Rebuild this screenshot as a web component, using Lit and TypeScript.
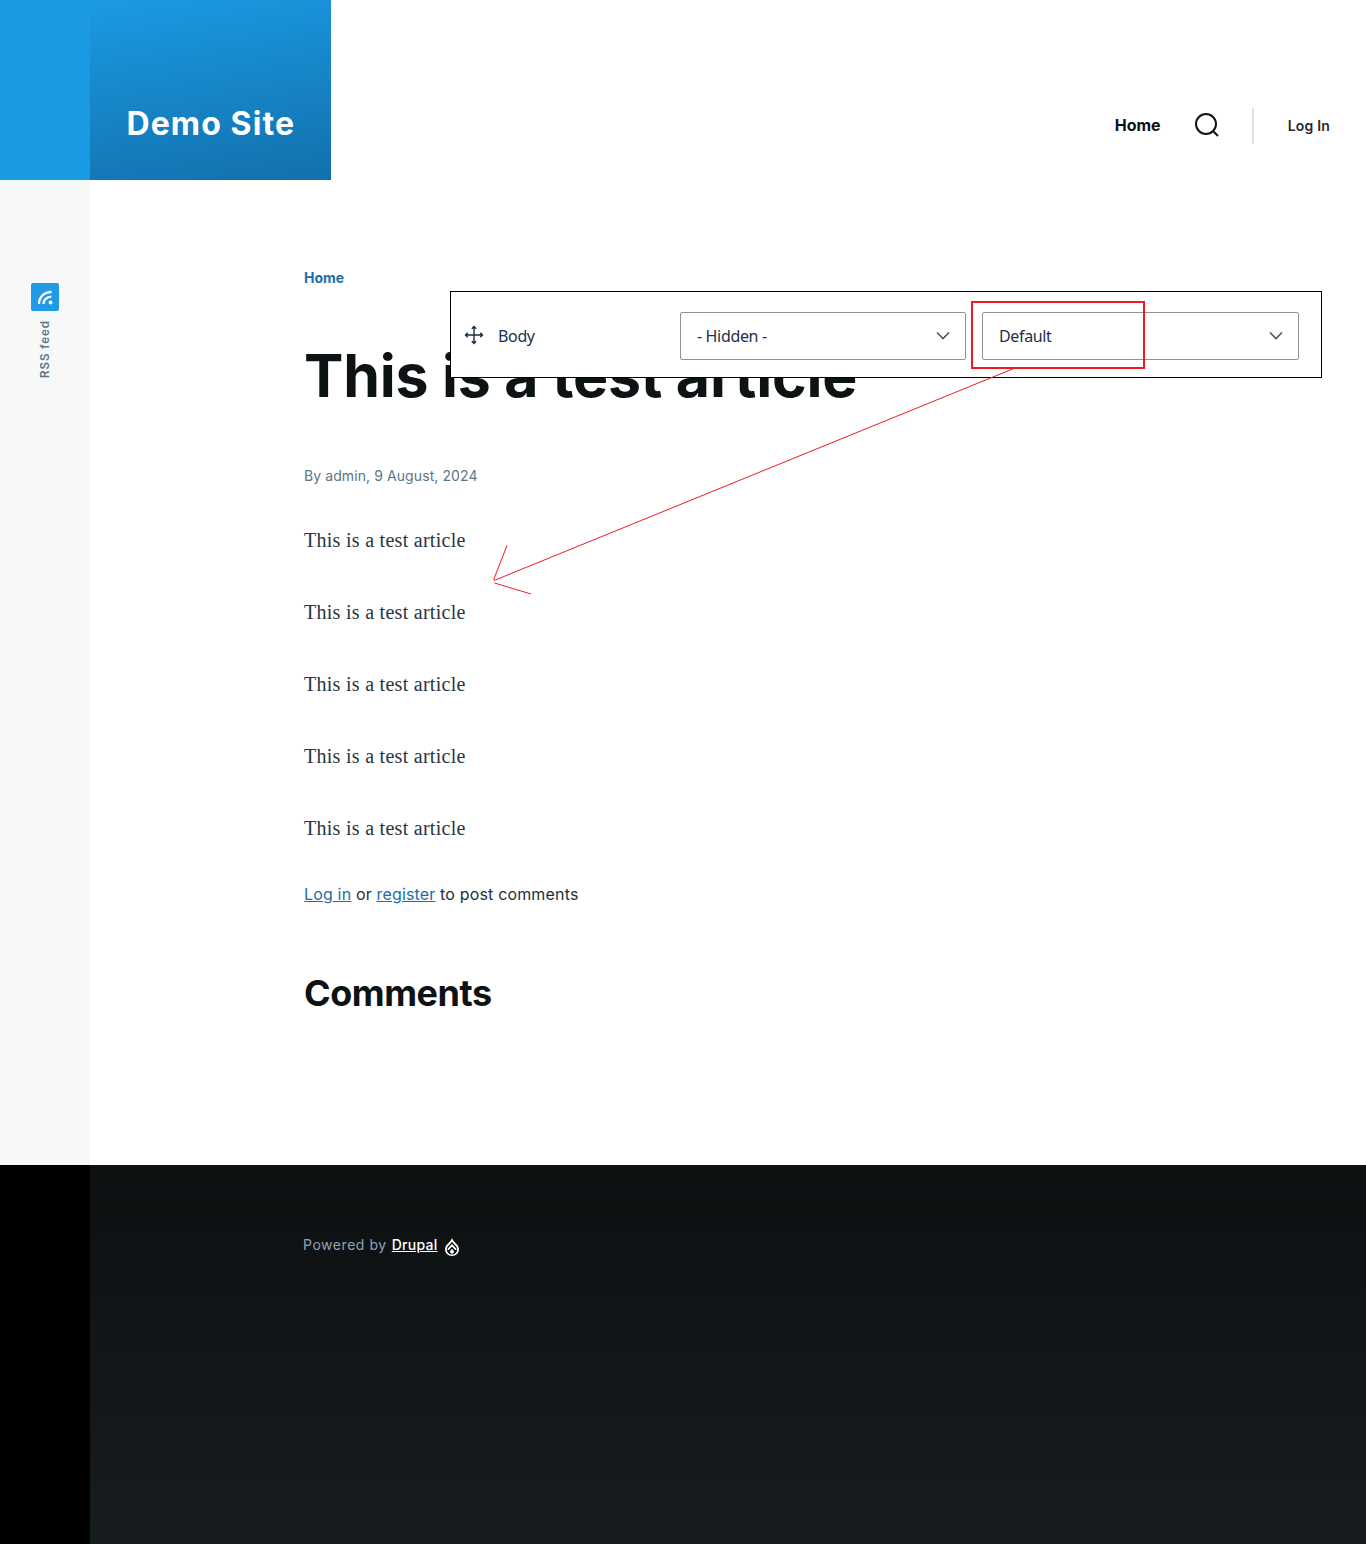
import { LitElement, html, css, svg } from "lit";
import { customElement } from "lit/decorators.js";

@customElement("app-root")
export class AppRoot extends LitElement {
  static styles = css`
    :host { display: block; position: relative; width: 1366px; height: 1544px; overflow: hidden; background: #fff; font-family: Inter, "Liberation Sans", sans-serif; }
    .header { display: flex; height: 180px; align-items: stretch; }
    .brand-left { width: 90px; background: #1b9ae4; }
    .brand { width: 241px; background: linear-gradient(170deg, #1b9ae4 0%, #1270ab 100%); display: flex; padding: 102px 0 0 36.5px; box-sizing: border-box; }
    .brand span { color: #fff; font-size: 32px; line-height: 44px; font-weight: 700; letter-spacing: 1.1px; white-space: nowrap; }
    .nav { flex: 1; display: flex; align-items: center; justify-content: flex-end; padding: 70px 36px 0 0; box-sizing: border-box; height: 180px; }
    .nav-home { font-size: 16px; font-weight: 700; color: #0d1214; margin-right: 33px; }
    .nav-search { display: block; margin-right: 32px; }
    .nav-sep { width: 2px; height: 36px; background: #dbe0e5; margin: 2px 34px 0 0; }
    .nav-login { font-size: 14px; font-weight: 600; color: #1f2a33; letter-spacing: 0.2px; }
    .middle { display: flex; height: 985px; }
    .side { width: 90px; background: #f7f9f9; display: flex; flex-direction: column; align-items: center; padding-top: 103px; box-sizing: border-box; }
    .rss-box { width: 28px; height: 28px; border-radius: 2px; background: #1f9be6; display: block; }
    .rss-text { writing-mode: vertical-rl; transform: rotate(180deg); font-size: 11.5px; line-height: 14px; font-weight: 600; color: #5d7585; margin-top: 9px; letter-spacing: 0.95px; }
    .content { flex: 1; padding: 89px 0 0 214px; box-sizing: border-box; }
    .crumb { font-size: 14px; line-height: 18px; font-weight: 700; color: #1b6ea8; }
    h1 { margin: 53px 0 0; font-size: 59px; line-height: 72px; font-weight: 700; color: #0d1214; letter-spacing: -0.22px; white-space: nowrap; }
    .meta { margin-top: 55px; font-size: 14px; line-height: 18px; color: #5d7585; letter-spacing: 0.09px; }
    .body { margin-top: 42px; display: flex; flex-direction: column; gap: 45px; }
    .body p { margin: 0; font-family: "Liberation Serif", serif; font-size: 20px; line-height: 27px; color: #2a3540; letter-spacing: 0.28px; }
    .login { margin-top: 39px; font-size: 16px; line-height: 27px; color: #232f38; letter-spacing: 0.16px; }
    .login a { color: #1b6ea8; text-decoration: underline; }
    h2 { margin: 63px 0 0; font-size: 36px; line-height: 45px; font-weight: 700; color: #0d1214; letter-spacing: -0.45px; }
    .footer { display: flex; height: 379px; }
    .foot-left { width: 90px; background: #000; }
    .foot { flex: 1; background: linear-gradient(180deg, #0d1011 0%, #171c1f 100%); padding: 71px 0 0 213px; box-sizing: border-box; }
    .foot-line { display: flex; align-items: flex-start; font-size: 14px; line-height: 18px; color: #8fa3b0; letter-spacing: 0.55px; }
    .foot-line a { color: #fff; text-decoration: underline; margin-left: 5px; font-weight: 500; letter-spacing: 0.25px; }
    .foot-line svg { margin: 2px 0 0 7px; display: block; }
    .panel { position: absolute; left: 450px; top: 291px; width: 872px; height: 87px; box-sizing: border-box; border: 1px solid #000; background: #fff; display: flex; align-items: center; padding: 3px 22px 0 13px; font-family: "Noto Sans", sans-serif; font-size: 16px; letter-spacing: -0.35px; line-height: 22px; color: #232f4b; }
    .panel-move { display: block; margin-top: -3px; }
    .panel-label { margin-left: 14px; width: 182px; }
    .select { box-sizing: border-box; height: 48px; border: 1px solid #8e929c; border-radius: 2px; display: flex; align-items: center; justify-content: space-between; padding: 0 15px 0 16px; }
    .select svg { margin-top: -2px; }
    .select.a { width: 286px; }
    .select.b { width: 317px; margin-left: 16px; }
    .overlay { position: absolute; left: 0; top: 0; pointer-events: none; }
  `;

  render() {
    const chevron = html`<svg width="14" height="9" viewBox="0 0 14 9" fill="none" stroke="#55565b" stroke-width="1.6"><path d="M1 1.5l6 6 6-6"/></svg>`;
    return html`
      <div class="header">
        <div class="brand-left"></div>
        <div class="brand"><span>Demo Site</span></div>
        <div class="nav">
          <span class="nav-home">Home</span>
          <svg class="nav-search" width="26" height="26" viewBox="0 0 26 26" fill="none" stroke="#0d1214" stroke-width="2"><circle cx="12" cy="12" r="10"/><path d="M19.500 19.500l4.500 4.500"/></svg>
          <span class="nav-sep"></span>
          <span class="nav-login">Log In</span>
        </div>
      </div>
      <div class="middle">
        <div class="side">
          <svg class="rss-box" viewBox="0 0 28 28" fill="none" stroke="#fff" stroke-width="2.300" stroke-linecap="butt"><path d="M8 21c0-6.500 4.800-12 12.500-12"/><path d="M12.500 21c0-3.800 3-7.300 8-7.300"/><circle cx="19.500" cy="19.500" r="1.900" fill="#fff" stroke="none"/></svg>
          <span class="rss-text">RSS feed</span>
        </div>
        <div class="content">
          <div class="crumb">Home</div>
          <h1>This is a test article</h1>
          <div class="meta">By admin, 9 August, 2024</div>
          <div class="body">
            ${[1, 2, 3, 4, 5].map(() => html`<p>This is a test article</p>`)}
          </div>
          <div class="login"><a>Log in</a> or <a>register</a> to post comments</div>
          <h2>Comments</h2>
        </div>
      </div>
      <div class="footer">
        <div class="foot-left"></div>
        <div class="foot">
          <div class="foot-line">Powered by <a>Drupal</a>
            <svg width="16" height="18" viewBox="0 0 16 18"><path fill="#fff" d="M8 0c.7 2.400 2.300 3.700 4 5.400 1.700 1.700 3 3.400 3 5.900C15 15 12 18 8 18s-7-3-7-6.700c0-2.500 1.300-4.200 3-5.900C5.700 3.700 7.300 2.400 8 0z"/><path fill="#0e1214" d="M8 3.800c.6 1.100 1.700 2.100 2.800 3.200 1.400 1.400 2.400 2.700 2.400 4.400 0 2.900-2.300 5-5.200 5s-5.200-2.100-5.200-5c0-1.700 1-3 2.400-4.400C6.300 5.900 7.400 4.900 8 3.800z"/><path fill="none" stroke="#fff" stroke-width="1.700" d="M4.200 12c0-1.500 2.400-2.800 3.800-4.800 1.400 2 3.800 3.300 3.800 4.800"/><path fill="#fff" d="M8 10.700c.5.900 2 1.800 2 3.100 0 1.100-.9 1.900-2 1.900s-2-.8-2-1.900c0-1.300 1.500-2.200 2-3.100z"/></svg>
          </div>
        </div>
      </div>
      <div class="panel">
        <svg class="panel-move" width="20" height="20" viewBox="0 0 20 20" fill="none" stroke="#1d2a4a" stroke-width="1.400"><path d="M10 1.500v17M1.500 10h17M7.800 3.700l2.200-2.200 2.200 2.200M7.800 16.300l2.200 2.200 2.200-2.200M3.700 7.800L1.500 10l2.200 2.200M16.300 7.800l2.200 2.200-2.200 2.200"/></svg>
        <span class="panel-label">Body</span>
        <div class="select a"><span>- Hidden -</span>${chevron}</div>
        <div class="select b"><span>Default</span>${chevron}</div>
      </div>
      <svg class="overlay" width="1366" height="1544" fill="none">
        ${svg`<rect x="972" y="302" width="172" height="66" stroke="#ed1c24" stroke-width="2"/>
        <path d="M1015 368L494 580.500M507 545.500L493.500 580M494.500 583L531 594" stroke="#ed1c24" stroke-width="1"/>`}
      </svg>
    `;
  }
}
